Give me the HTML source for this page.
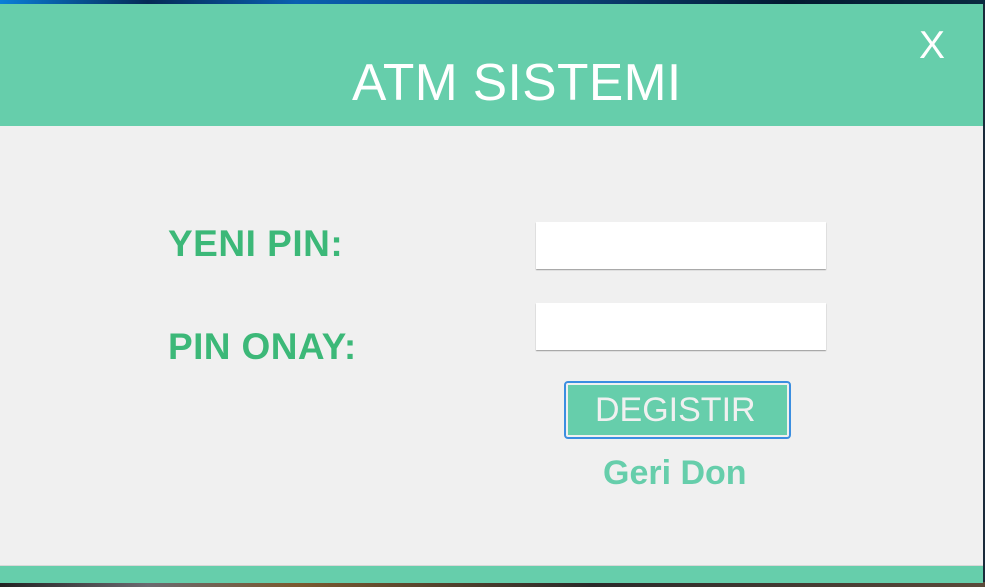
<!DOCTYPE html>
<html><head><style>
html,body{margin:0;padding:0;}
body{width:985px;height:587px;position:relative;overflow:hidden;background:#1a2a3a;font-family:"Liberation Sans",sans-serif;}
.topbg{position:absolute;left:0;top:0;width:985px;height:4px;background:linear-gradient(90deg,#0a7fd8,#052a55 15%,#0a5fb0 30%,#0b3d70 60%,#021a30 80%,#0a2a40);}
.botbg{position:absolute;left:0;top:582px;width:985px;height:5px;background:linear-gradient(90deg,#222,#6a6a70 15%,#7a5a30 30%,#2a2a2a 60%,#5a4a3a);}
.win{position:absolute;left:0;top:4px;width:983px;height:578px;background:#f0f0f0;}
.hdr{position:absolute;left:0;top:0;width:983px;height:122px;background:#66ceab;}
.ftr{position:absolute;left:0;top:561px;width:983px;height:17px;background:#66ceab;border-top:1px solid #d8d8d8;}
.t{position:absolute;white-space:nowrap;line-height:1;}
.inp{position:absolute;left:536px;width:290px;height:47px;background:#fff;box-shadow:0 1px 1px #999;}
.btn{position:absolute;left:564px;top:381px;width:223px;height:54px;border:2px solid #3b8ee0;border-radius:4px;background:#f0f0f0;}
.btn div{position:absolute;left:2px;top:2px;right:2px;bottom:2px;background:#66ceab;}
</style></head><body>
<div class="topbg"></div><div class="botbg"></div>
<div class="win">
<div class="hdr"></div>
<div class="ftr"></div>
</div>
<div class="t" style="left:352px;top:57px;font-size:51.5px;letter-spacing:0.4px;color:#fff;">ATM SISTEMI</div>
<div class="t" style="left:919px;top:26px;font-size:39px;color:#fff;">X</div>
<div class="t" style="left:168px;top:225px;font-size:37px;font-weight:bold;letter-spacing:0.5px;color:#3cb878;">YENI PIN:</div>
<div class="t" style="left:168px;top:328px;font-size:37px;font-weight:bold;letter-spacing:0.4px;color:#3cb878;">PIN ONAY:</div>
<div class="inp" style="top:222px;"></div>
<div class="inp" style="top:303px;"></div>
<div class="btn"><div></div></div>
<div class="t" style="left:595px;top:393px;font-size:34px;color:#f0f0f0;">DEGISTIR</div>
<div class="t" style="left:603px;top:456px;font-size:34px;font-weight:bold;color:#66ceab;">Geri Don</div>
</body></html>
